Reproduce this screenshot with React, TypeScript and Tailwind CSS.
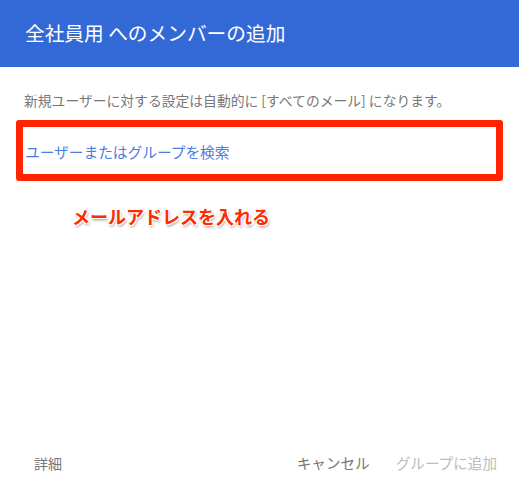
export default function App() {
  return (
    <div className="flex flex-col h-[490px] w-[519px] bg-white font-['Noto_Sans_CJK_JP',sans-serif]">
      <div className="flex items-center h-[67px] px-[25px] bg-[#3369d6]">
        <div className="text-[19.7px] text-white leading-none pb-[2px]">全社員用 へのメンバーの追加</div>
      </div>
      <div className="pt-[24px] px-[24px] text-[13.8px] leading-[18px] text-[#777]">
        新規ユーザーに対する設定は自動的に [すべてのメール] になります。
      </div>
      <div className="mt-[11px] mx-[16px] h-[61px] border-[7px] border-[#ff2300] rounded-[3px] flex items-center pl-[2px] pt-[4px]">
        <div className="text-[14.7px] text-[#4a7ddf] leading-none">ユーザーまたはグループを検索</div>
      </div>
      <div className="pl-[72px] pt-[26px]">
        <div className="text-[18px] font-bold leading-none text-[#ff2a00] [text-shadow:1px_1px_0_#fff,-1px_-1px_0_#fff,1px_-1px_0_#fff,-1px_1px_0_#fff,1px_2px_3px_rgba(0,0,0,0.45)]">
          メールアドレスを入れる
        </div>
      </div>
      <div className="flex-1" />
      <div className="flex items-center justify-between h-[48px] pl-[34px] pr-[22px] pb-[6px] text-[14.6px] leading-none">
        <div className="text-[#777] text-[14px]">詳細</div>
        <div className="flex gap-[26px]">
          <div className="text-[#777]">キャンセル</div>
          <div className="text-[#bdbdbd]">グループに追加</div>
        </div>
      </div>
    </div>
  );
}
